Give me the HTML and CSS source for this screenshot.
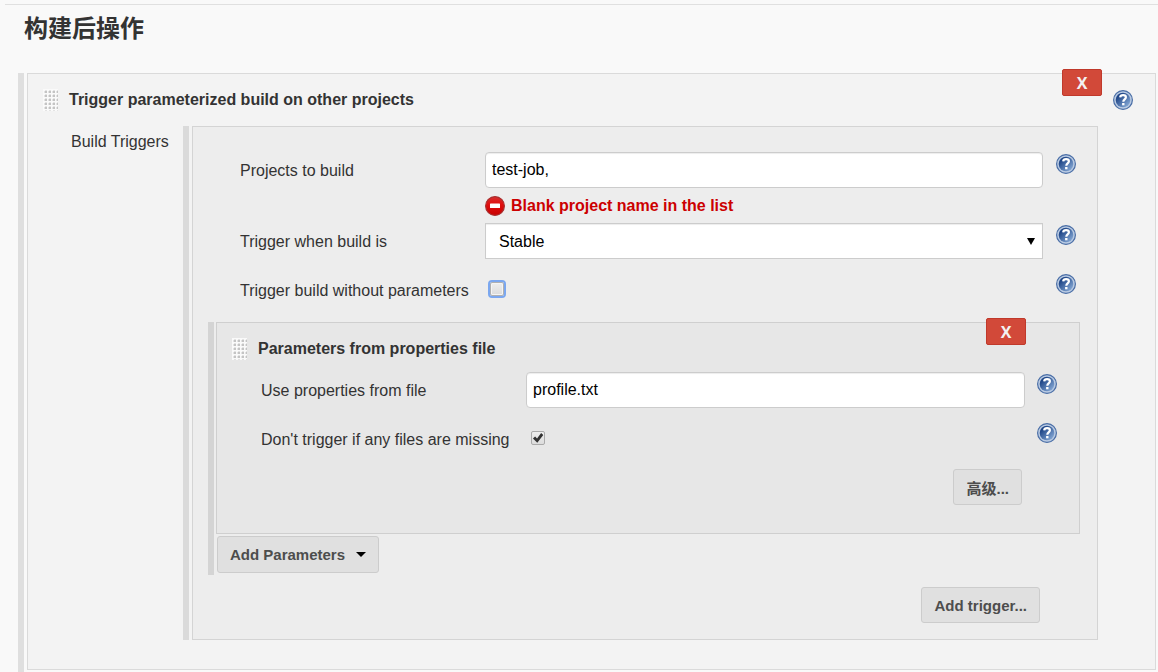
FILE: index.html
```html
<!DOCTYPE html>
<html lang="zh-CN">
<head>
  <meta charset="UTF-8" />
  <meta name="viewport" content="width=device-width, initial-scale=1.0" />
  <title>构建后操作</title>
  <link rel="stylesheet" href="styles.css">
</head>
<body>
  <svg width="0" height="0" class="sprites" aria-hidden="true">
    <defs>
      <linearGradient id="help-fill" x1="0" y1="0" x2="1" y2="1">
        <stop offset="0.2" stop-color="#1d4486" />
        <stop offset="0.9" stop-color="#86a9d6" />
      </linearGradient>
      <linearGradient id="error-fill" x1="0" y1="0" x2="0" y2="1">
        <stop offset="0" stop-color="#d83030" />
        <stop offset="0.4" stop-color="#e01010" />
        <stop offset="1" stop-color="#c80000" />
      </linearGradient>
      <symbol id="help" viewBox="0 0 20 20">
        <circle cx="10" cy="10" r="9.4" fill="#b9cae2" stroke="#4a6ea6" stroke-width="1.2" />
        <circle cx="10" cy="10" r="7.3" fill="url(#help-fill)" />
        <path d="M7.2 7.4C7.3 5.8 8.4 5.1 10.1 5.1c1.8 0 2.8.8 2.8 2.2 0 2-2.6 2.2-2.6 4.4" fill="none" stroke="#fff" stroke-width="2.2" />
        <rect x="9.1" y="13" width="2.4" height="2.3" fill="#fff" />
      </symbol>
      <symbol id="error" viewBox="0 0 20 20">
        <circle cx="10" cy="10" r="9.4" fill="url(#error-fill)" stroke="#a83030" stroke-width="1.2" />
        <rect x="5" y="7.5" width="10" height="4.5" rx="0.6" fill="#fff" />
      </symbol>
    </defs>
  </svg>

  <form class="config">
    <h1>构建后操作</h1>

    <div class="chunk">
      <div class="box outer">
        <button type="button" class="delete">X</button>
        <div class="box-header">
          <span class="grip"></span>
          <h2>Trigger parameterized build on other projects</h2>
          <a href="#" class="help" aria-label="Help"><svg><use href="#help" /></svg></a>
        </div>

        <div class="triggers">
          <div class="triggers-label">Build Triggers</div>
          <div class="chunk">
            <div class="box middle">
              <div class="rows">
                <div class="row has-error">
                  <label for="projects">Projects to build</label>
                  <div class="field">
                    <input type="text" id="projects" value="test-job,">
                    <div class="error"><svg><use href="#error" /></svg>Blank project name in the list</div>
                  </div>
                  <a href="#" class="help" aria-label="Help"><svg><use href="#help" /></svg></a>
                </div>
                <div class="row">
                  <label for="condition">Trigger when build is</label>
                  <div class="field select">
                    <select id="condition">
                      <option>Stable</option>
                    </select>
                  </div>
                  <a href="#" class="help" aria-label="Help"><svg><use href="#help" /></svg></a>
                </div>
                <div class="row">
                  <label for="no-params">Trigger build without parameters</label>
                  <div class="field check">
                    <input type="checkbox" id="no-params" class="highlight">
                  </div>
                  <a href="#" class="help" aria-label="Help"><svg><use href="#help" /></svg></a>
                </div>
              </div>

              <div class="chunk params">
                <div class="box inner">
                  <button type="button" class="delete">X</button>
                  <div class="box-header">
                    <span class="grip"></span>
                    <h2>Parameters from properties file</h2>
                  </div>
                  <div class="rows">
                    <div class="row">
                      <label for="file">Use properties from file</label>
                      <div class="field"><input type="text" id="file" value="profile.txt"></div>
                      <a href="#" class="help" aria-label="Help"><svg><use href="#help" /></svg></a>
                    </div>
                    <div class="row">
                      <label for="missing">Don't trigger if any files are missing</label>
                      <div class="field check"><input type="checkbox" id="missing" checked></div>
                      <a href="#" class="help" aria-label="Help"><svg><use href="#help" /></svg></a>
                    </div>
                  </div>
                  <div class="actions">
                    <button type="button" class="btn">高级...</button>
                  </div>
                </div>
                <button type="button" class="btn add-params">Add Parameters<span class="caret"></span></button>
              </div>

              <div class="actions">
                <button type="button" class="btn">Add trigger...</button>
              </div>
            </div>
          </div>
        </div>
      </div>
    </div>
  </form>
</body>
</html>
```

FILE: styles.css
```css
* {
  box-sizing: border-box;
}
body {
  margin: 0;
  padding-top: 4px;
  background: #f9f9f9;
  color: #333;
  font-family: "Liberation Sans", Arial, "Noto Sans CJK SC", sans-serif;
  font-size: 16px;
  line-height: 20px;
}
.sprites {
  position: absolute;
}
.config {
  margin-left: 5px;
  padding: 0 2px 0 13px;
  border-top: 1px solid #e0e0e0;
}
h1 {
  margin: 0;
  padding: 6px 6px 30px;
  font-family: "Noto Sans CJK SC", sans-serif;
  font-size: 24px;
  line-height: 32px;
  font-weight: bold;
}
h2 {
  flex: 1;
  margin: 0;
  font-size: 16px;
  line-height: 24px;
  font-weight: bold;
}

/* nested blocks, each level gets a bit darker */
.chunk {
  border-left: 6px solid rgba(0, 0, 0, 0.1);
  padding-left: 3px;
}
.config > .chunk {
  padding-bottom: 2px;
}
.box {
  position: relative;
  background: rgba(0, 0, 0, 0.025);
  border: 1px solid rgba(0, 0, 0, 0.1);
}
.outer {
  padding-bottom: 29px;
}
.middle {
  padding: 25px 0 16px;
}
.inner {
  padding-bottom: 28px;
}
.box-header {
  display: flex;
  align-items: center;
  gap: 11px;
  padding: 14px 22px 0 15px;
}
.grip {
  width: 15px;
  height: 22px;
  background-color: #fafafa;
  background-image: radial-gradient(circle at 3px 3px, #c4c4c4 1px, transparent 2px);
  background-size: 4px 4px;
}

.triggers {
  display: flex;
  margin: 14px 57px 0 43px;
}
.triggers-label {
  width: 112px;
  padding-top: 6px;
}
.triggers .chunk {
  flex: 1;
}

.rows {
  display: grid;
  gap: 11px;
}
.row {
  display: grid;
  grid-template-columns: 245px 1fr 20px;
  align-items: start;
}
.middle > .rows > .row {
  padding: 0 21px 0 47px;
}
.has-error {
  margin-bottom: -11px;
}
.inner .rows {
  padding-top: 11px;
}
.inner .row {
  grid-template-columns: 265px 1fr 20px;
  padding: 0 22px 0 44px;
}
.row label {
  line-height: 38px;
}
.row .help {
  margin-top: 2px;
}
.field {
  margin-right: 13px;
}
.inner .field {
  margin-right: 12px;
}
.help {
  display: block;
  width: 20px;
  height: 20px;
}
.help svg,
.error svg {
  display: block;
  width: 20px;
  height: 20px;
}

input[type="text"],
select {
  display: block;
  width: 100%;
  height: 36px;
  padding: 0 6px;
  border: 1px solid #ccc;
  border-radius: 4px;
  background: #fff;
  box-shadow: inset 0 1px 1px rgba(0, 0, 0, 0.075);
  color: #000;
  font: inherit;
}
select {
  appearance: none;
  padding: 1px 13px 0;
  border-radius: 0;
}
.select {
  position: relative;
}
.select::after {
  content: "";
  position: absolute;
  top: 15px;
  right: 8px;
  border: 4px solid transparent;
  border-top: 7px solid #000;
  border-bottom: 0;
  pointer-events: none;
}
.error {
  display: flex;
  align-items: center;
  gap: 6px;
  height: 35px;
  color: #c00;
  font-weight: bold;
}

.check {
  display: flex;
  align-items: center;
  height: 34px;
  padding-left: 5px;
}
input[type="checkbox"] {
  appearance: none;
  width: 14px;
  height: 14px;
  margin: 0;
  border: 1px solid #aaa;
  border-radius: 2px;
  background: linear-gradient(#eee, #dcdcdc);
}
input[type="checkbox"]:checked::before {
  content: "";
  display: block;
  width: 12px;
  height: 12px;
  background: #333;
  clip-path: polygon(8% 54%, 26% 38%, 42% 54%, 76% 8%, 94% 24%, 44% 90%);
}
input.highlight {
  border-color: #b0b0b0;
  box-shadow: inset 0 0 0 1px #f4f4f4;
  outline: 2px solid #7ba7ef;
}

.delete {
  position: absolute;
  top: -5px;
  right: 53px;
  width: 40px;
  height: 27px;
  padding: 0;
  border: 1px solid #c0392b;
  border-radius: 2px;
  background: #d24939;
  color: #f2f2f2;
  font: bold 16px "Open Sans", sans-serif;
}
.btn {
  height: 36px;
  padding: 0 12px;
  border: 1px solid #ccc;
  border-radius: 3px;
  background: #e0e0e0;
  color: #4d4d4d;
  font: bold 15px "Liberation Sans", "Noto Sans CJK SC", sans-serif;
}
.actions {
  display: flex;
  justify-content: flex-end;
  padding: 10px 57px 0 0;
}
.params {
  margin: 12px 17px 2px 15px;
  padding: 0 0 2px 2px;
}
.add-params {
  display: flex;
  align-items: center;
  gap: 11px;
  height: 37px;
  margin: 2px 0 0 1px;
}
.caret {
  border: 5px solid transparent;
  border-top-color: #000;
  border-bottom: 0;
}
```
